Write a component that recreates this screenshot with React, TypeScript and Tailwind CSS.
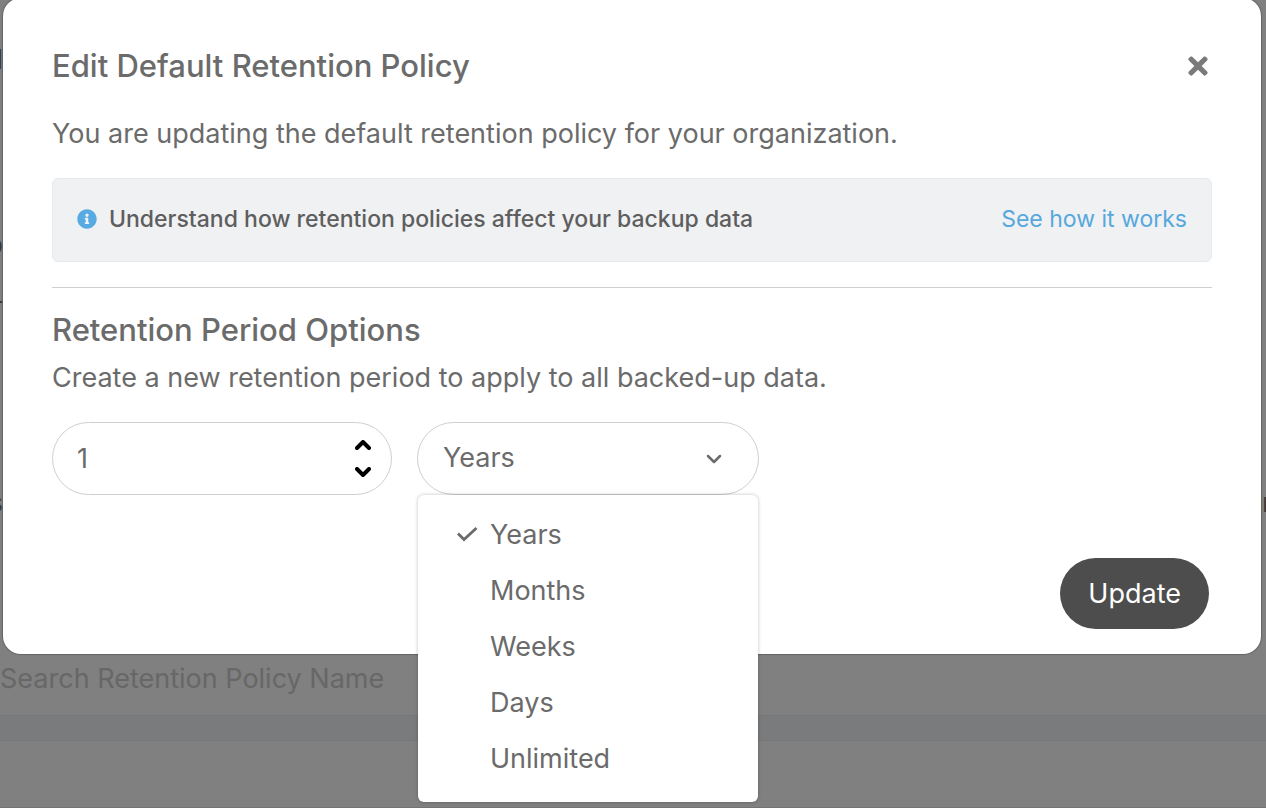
import React, { useState } from "react"
import { FaInfoCircle, FaTimes } from "react-icons/fa"

const units = ["Years", "Months", "Weeks", "Days", "Unlimited"]

function Chevron({ up = false, className }: { up?: boolean; className: string }) {
  return (
    <svg viewBox="0 0 16 10" fill="none" stroke="currentColor" strokeLinecap="round" strokeLinejoin="round" className={className}>
      <path d={up ? "M2 8 8 2l6 6" : "M2 2l6 6 6-6"} />
    </svg>
  )
}

// Page that sits behind the dialog, only its edges show
function PageBehind() {
  return (
    <div className="absolute inset-0 flex flex-col overflow-hidden bg-[#808080]">
      <div className="flex h-[654px] shrink-0 justify-between overflow-hidden text-[#3a3a3a]">
        <div className="flex w-[3px] flex-col overflow-hidden">
          <div className="flex h-[76px] items-end justify-end">l</div>
          <div className="flex h-[185px] items-end justify-end">p</div>
          <div className="flex h-[42px] items-end justify-end border-b-2 border-[#3a3a3a]" />
          <div className="flex h-[216px] items-end justify-end">s</div>
        </div>
        <div className="flex w-1 flex-col overflow-hidden">
          <div className="flex h-[519px] items-end">r</div>
        </div>
      </div>
      <input
        type="search"
        aria-label="Search Retention Policy Name"
        placeholder="Search Retention Policy Name"
        className="h-[61px] w-full shrink-0 bg-transparent pb-3 text-[#676767] outline-none placeholder:text-[#676767]"
      />
      <div className="h-[26px] shrink-0 border-y border-[#777779] bg-[#7a7b7d]" />
      <div className="flex-1 border-b border-[#747474]" />
    </div>
  )
}

export default function App() {
  const [amount, setAmount] = useState(1)
  const [unit, setUnit] = useState("Years")

  return (
    <main className="relative min-h-screen overflow-hidden font-['Inter',sans-serif] text-[27px] leading-8 text-[#6b6b6b]">
      <PageBehind />

      <section
        role="dialog"
        aria-labelledby="dialog-title"
        className="relative -mt-0.5 mr-[5px] ml-[3px] rounded-[18px] bg-white px-[49px] pt-[52px] pb-[25px] shadow-[0_0_1px_1px_#646464]"
      >
        <header className="flex items-center justify-between">
          <h1 id="dialog-title" className="text-[31px] font-medium">Edit Default Retention Policy</h1>
          <button aria-label="Close" className="text-[#7a7a7a]">
            <FaTimes className="size-7" />
          </button>
        </header>

        <p className="mt-9">You are updating the default retention policy for your organization.</p>

        <div className="mt-7 flex h-[84px] items-center justify-between rounded-md border border-[#e9eaec] bg-[#f0f1f3] px-6 pb-0.5 text-[23px]">
          <div className="flex items-center gap-3">
            <FaInfoCircle className="size-5 text-[#57abe3]" />
            <strong className="font-medium text-[#5e5e5e]">Understand how retention policies affect your backup data</strong>
          </div>
          <a href="#" className="text-[#57a8dc]">See how it works</a>
        </div>

        <hr className="mt-[25px] border-[#cfcfcf]" />

        <h2 className="mt-[26px] text-[31px] font-medium">Retention Period Options</h2>
        <p className="mt-4">Create a new retention period to apply to all backed-up data.</p>

        <div className="mt-7 flex gap-[25px]">
          <div className="flex h-[73px] w-[340px] items-center justify-between rounded-full border border-[#cfcfcf] pr-5 pl-6">
            <input
              type="text"
              inputMode="numeric"
              aria-label="Retention length"
              value={amount}
              onChange={(e) => setAmount(Number(e.target.value) || 1)}
              className="w-0 flex-1 bg-transparent outline-none"
            />
            <div className="flex flex-col gap-[17px] text-black">
              <button aria-label="Increase" onClick={() => setAmount(amount + 1)} className="flex">
                <Chevron up className="h-[10px] w-4 stroke-[4]" />
              </button>
              <button aria-label="Decrease" onClick={() => setAmount(Math.max(1, amount - 1))} className="flex">
                <Chevron className="h-[10px] w-4 stroke-[4]" />
              </button>
            </div>
          </div>

          <div className="relative h-[73px] w-[342px]">
            <select
              aria-label="Retention unit"
              value={unit}
              onChange={(e) => setUnit(e.target.value)}
              className="size-full appearance-none rounded-full border border-[#cfcfcf] bg-transparent px-[25px] pb-0.5 outline-none"
            >
              {units.map((u) => (
                <option key={u}>{u}</option>
              ))}
            </select>
            <Chevron className="pointer-events-none absolute top-8 right-[37px] h-[10px] w-4 stroke-[2.5]" />

            <ul
              role="listbox"
              aria-label="Retention unit options"
              className="absolute inset-x-px top-full z-10 rounded-md bg-white pt-3 pb-[15px] shadow-[0_0_3px_1px_#00000028]"
            >
              {units.map((u) => (
                <li
                  key={u}
                  role="option"
                  aria-selected={u === unit}
                  onClick={() => setUnit(u)}
                  className="flex h-14 items-center gap-3 pl-[38px]"
                >
                  <span className="w-[22px]">
                    {u === unit && (
                      <svg viewBox="0 0 22 18" fill="none" stroke="currentColor" strokeWidth="2.8" className="h-[18px] w-[22px]">
                        <path d="M2 7.5l6 6L20.500 2" />
                      </svg>
                    )}
                  </span>
                  {u}
                </li>
              ))}
            </ul>
          </div>
        </div>

        <footer className="mt-[63px] flex justify-end pr-[3px]">
          <button className="h-[71px] rounded-full bg-[#4d4d4d] px-7 text-white">Update</button>
        </footer>
      </section>
    </main>
  )
}
